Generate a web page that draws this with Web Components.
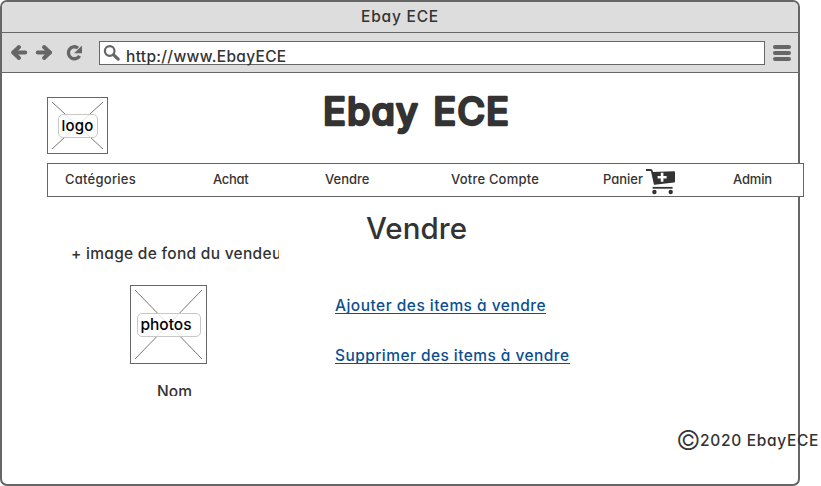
<!DOCTYPE html>
<html lang="fr">
<head>
<meta charset="utf-8">
<title>Ebay ECE</title>
<style>
body { margin: 0; background: #fff; color: #333; font-family: Inter, "Open Sans", sans-serif; font-feature-settings: "cv11"; overflow: hidden; }
</style>
</head>
<body>
<ebay-page></ebay-page>
<script>
const define = (name, html, setup) => customElements.define(name, class extends HTMLElement {
  connectedCallback() {
    if (this.shadowRoot) return;
    this.attachShadow({ mode: "open" }).innerHTML = html;
    if (setup) setup(this, this.shadowRoot);
  }
});

// A line of text spaced out to a given width: <fit-text w="77" size="16" weight="500">
define("fit-text", `<style>
  :host { display: block; white-space: nowrap; line-height: 20px; flex: none; }
  span { display: inline-block; white-space: pre; }
</style><span><slot></slot></span>`, (el, root) => {
  el.style.fontSize = el.getAttribute("size") + "px";
  el.style.fontWeight = el.getAttribute("weight") || 500;
  const span = root.querySelector("span");
  const w = +el.getAttribute("w");
  const count = el.textContent.length;
  const natural = span.getBoundingClientRect().width;
  el.style.letterSpacing = (w - natural) / count + "px";
  el.style.width = w + "px";
});

define("heading-text", `<style>
  :host { display: block; } svg { display: block; overflow: visible; }
  text { font-size: 38px; font-weight: 500; fill: #333; stroke: #333; stroke-width: 2.4px; stroke-linejoin: round; word-spacing: 3px; }
</style><svg width="184" height="40"><text x="-1" y="33.2" textLength="186"></text></svg>`, (el, root) => {
  root.querySelector("text").textContent = el.getAttribute("label");
});

define("picture-box", `<style>
  :host { display: grid; box-sizing: border-box; border: 1px solid #666; background: #fff; color: #000; flex: none; }
  svg, div { grid-area: 1 / 1; }
  svg { width: 100%; height: 100%; display: block; }
  div { align-self: center; justify-self: center; display: flex; align-items: center; box-sizing: border-box; height: 24px;
    border: 1px solid #c8c8c8; border-radius: 5px; background: rgba(255,255,255,.8); z-index: 1; }
</style><svg preserveAspectRatio="none"><path fill="none" stroke="#777" stroke-width="1"/></svg><div><slot></slot></div>`, (el, root) => {
  const w = +el.getAttribute("w"), h = +el.getAttribute("h");
  el.style.width = w + "px"; el.style.height = h + "px";
  root.querySelector("svg").setAttribute("viewBox", `0 0 ${w - 2} ${h - 2}`);
  root.querySelector("path").setAttribute("d", `M4 4L${w - 6} ${h - 6}M${w - 6} 4L4 ${h - 6}`);
  const box = root.querySelector("div");
  box.style.width = el.getAttribute("label-width") + "px";
  box.style.paddingLeft = "3px";
});

define("cart-icon", `<style>:host { display: block; } svg { display: block; }</style>
<svg width="31" height="28" viewBox="0 0 31 28">
  <path d="M1 2H5.5Q6.6 2 6.9 3.2L9.8 16.4" fill="none" stroke="#333" stroke-width="1.8"/>
  <path d="M6.8 4L29 3.2Q30 3.2 30 4.2V13.4Q30 14.3 29 14.5L9.5 16.8Z" fill="#333"/>
  <path d="M7.6 19.8H27.6" fill="none" stroke="#333" stroke-width="1.8"/>
  <circle cx="9.4" cy="24" r="2.2" fill="#333"/><circle cx="25.7" cy="24" r="2.2" fill="#333"/>
  <path d="M17.1 4.8V13.8M12.6 9.3H21.6" stroke="#fff" stroke-width="2.6"/>
</svg>`);

define("browser-toolbar", `<style>
  :host { display: flex; align-items: flex-start; box-sizing: border-box; height: 41px; border-top: 1px solid #666; border-bottom: 1px solid #666; background: #ddd; padding: 8px 7px 0 8px; }
  svg { display: block; flex: none; }
  .buttons { width: 89px; }
  .url { display: flex; box-sizing: border-box; width: 666px; height: 24px; border: 1px solid #666; background: #fff; padding: 3px 0 0 3px; flex: none; }
  fit-text { margin: 2px 0 0 4px; }
  .menu { margin-left: 7px; }
</style>
<svg class="buttons" height="24" viewBox="10 41 89 24" fill="none" stroke="#666" stroke-linecap="round" stroke-linejoin="round">
  <path d="M13.3 52.5H25.3" stroke-width="3.8"/><path d="M19 47.1L13.3 52.5L19 57.9" stroke-width="4.1"/>
  <path d="M37.7 52.5H50" stroke-width="3.8"/><path d="M44.1 47.1L49.8 52.5L44.1 57.9" stroke-width="4.1"/>
  <path d="M79.6 55.8A6 6 0 1 1 78 48" stroke-width="3.4" stroke-linecap="butt"/>
  <path d="M82 45.6V53.2H74.1Z" fill="#666" stroke="none"/>
</svg>
<div class="url">
  <svg width="19" height="17" viewBox="0 0 19 17" fill="none" stroke="#666"><circle cx="6.7" cy="6" r="4.8" stroke-width="2.2"/><path d="M10.6 9.8L15.2 14.1" stroke-width="3.2" stroke-linecap="round"/></svg>
  <fit-text w="160.5" size="15.5">http://www.EbayECE</fit-text>
</div>
<svg class="menu" width="20" height="24" fill="#666"><rect x="1" y="4" width="18" height="4" rx="2"/><rect x="1" y="10" width="18" height="4" rx="2"/><rect x="1" y="16" width="18" height="4" rx="2"/></svg>`);

define("site-nav", `<style>
  :host { display: grid; grid-template-columns: 148px 112px 126px 152px 130px 1fr; box-sizing: border-box; width: 757px; height: 34px;
    border: 1px solid #666; background: #fff; padding: 5px 0 0 17px; }
  .cart { display: flex; gap: 2px; } cart-icon { margin-top: -1px; }
</style>
<fit-text w="71" size="13">Catégories</fit-text>
<fit-text w="35.5" size="13">Achat</fit-text>
<fit-text w="44.5" size="13">Vendre</fit-text>
<fit-text w="88" size="13">Votre Compte</fit-text>
<div class="cart"><fit-text w="40" size="13">Panier</fit-text><cart-icon></cart-icon></div>
<fit-text w="39" size="13">Admin</fit-text>`);

define("item-link", `<style>
  :host { display: block; height: 17px; border-bottom: 1px solid #0b4f91; color: #0b4f91; width: max-content; }
</style><slot></slot>`);

define("seller-panel", `<style>
  :host { display: block; width: 208px; height: 152px; overflow: hidden; }
  picture-box { margin: 21px 0 18px 59px; }
  .name { margin-left: 86px; }
</style>
<fit-text w="210.5" size="15.5">+ image de fond du vendeu</fit-text>
<picture-box w="77" h="79" label-width="64"><fit-text w="51" size="15.5">photos</fit-text></picture-box>
<fit-text class="name" w="35" size="15.5">Nom</fit-text>`);

define("ebay-page", `<style>
  :host { display: block; box-sizing: border-box; width: 800px; height: 486px; border: 2px solid #666; border-radius: 7px; background: #fff; }
  .title { height: 30px; box-sizing: border-box; padding: 5px 0 0 359px; background: #ddd; border-radius: 5px 5px 0 0; }
  browser-toolbar { padding-left: 8px; }
  main { padding: 24px 0 0 45px; }
  header { display: flex; gap: 216px; height: 66px; align-items: flex-start; }
  heading-text { margin-top: -5px; }
  .body { display: grid; grid-template-columns: 208px 1fr; column-gap: 56px; padding-left: 24px; height: 229px; box-sizing: border-box; }
  seller-panel { margin-top: 47px; }
  .actions { padding-top: 11px; }
  h2 { margin: 0 0 48px 31px; font: inherit; }
  h2 fit-text { line-height: 40px; }
  item-link + item-link { margin-top: 32px; }
  footer { display: flex; align-items: center; gap: 1px; height: 30px; padding-left: 629px; }
  .copy { line-height: 28px; }
</style>
<div class="title"><fit-text w="78" size="15.5">Ebay ECE</fit-text></div>
<browser-toolbar></browser-toolbar>
<main>
  <header><picture-box w="61" h="57" label-width="40"><fit-text w="32" size="15">logo</fit-text></picture-box><heading-text label="Ebay ECE"></heading-text></header>
  <site-nav></site-nav>
  <div class="body">
    <seller-panel></seller-panel>
    <div class="actions">
      <h2><fit-text w="101" size="29.5" weight="450">Vendre</fit-text></h2>
      <item-link><fit-text w="211" size="15.5">Ajouter des items à vendre</fit-text></item-link>
      <item-link><fit-text w="234.5" size="15.5">Supprimer des items à vendre</fit-text></item-link>
    </div>
  </div>
  <footer><fit-text class="copy" w="23" size="27" weight="300">©</fit-text><fit-text w="119" size="15.5">2020 EbayECE</fit-text></footer>
</main>`);
</script>
</body>
</html>
